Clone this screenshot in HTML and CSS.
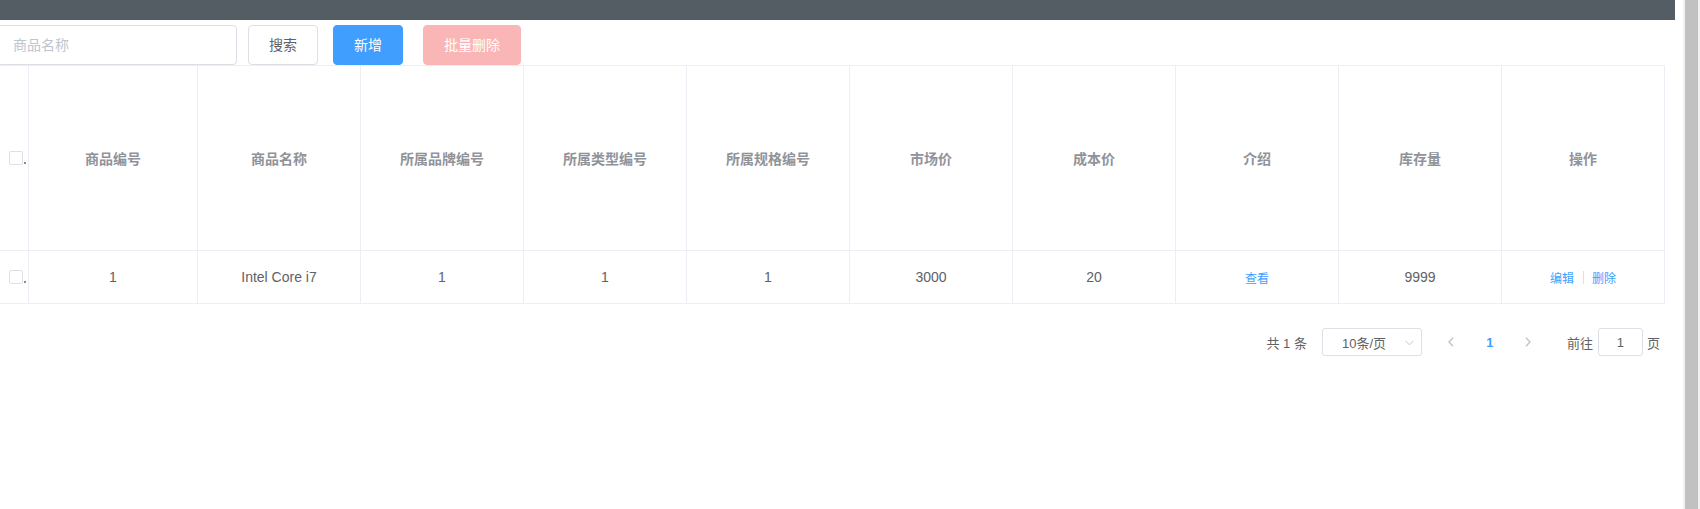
FILE: index.html
```html
<!DOCTYPE html>
<html lang="zh-CN">
<head>
<meta charset="utf-8">
<title>商品管理</title>
<link rel="stylesheet" href="styles.css">
</head>
<body>
<div class="app">
  <div class="main">
    <div class="page">
      <div class="topbar"></div>
      <div class="toolbar">
        <input class="search-input" type="text" placeholder="商品名称">
        <button class="btn btn-default">搜索</button>
        <button class="btn btn-primary">新增</button>
        <button class="btn btn-danger" disabled>批量删除</button>
      </div>
      <div class="table">
        <div class="th sel"><span class="checkbox"></span><span class="dot"></span></div>
        <div class="th">商品编号</div>
        <div class="th">商品名称</div>
        <div class="th">所属品牌编号</div>
        <div class="th">所属类型编号</div>
        <div class="th">所属规格编号</div>
        <div class="th">市场价</div>
        <div class="th">成本价</div>
        <div class="th">介绍</div>
        <div class="th">库存量</div>
        <div class="th">操作</div>

        <div class="td sel"><span class="checkbox"></span><span class="dot"></span></div>
        <div class="td">1</div>
        <div class="td">Intel Core i7</div>
        <div class="td">1</div>
        <div class="td">1</div>
        <div class="td">1</div>
        <div class="td">3000</div>
        <div class="td">20</div>
        <div class="td"><a class="link">查看</a></div>
        <div class="td">9999</div>
        <div class="td"><a class="link">编辑</a><span class="divider"></span><a class="link">删除</a></div>
      </div>
      <div class="pagination">
        <span class="total">共 1 条</span>
        <div class="sizes">
          <span class="sizes-text">10条/页</span>
          <svg class="sizes-arrow" width="9" height="6" viewBox="0 0 9 6"><polyline points="0.5,0.8 4.5,4.8 8.5,0.8" fill="none" stroke="#c0c4cc" stroke-width="1"/></svg>
        </div>
        <span class="nav prev"><svg width="6" height="10" viewBox="0 0 6 10"><polyline points="5,0.8 1,5 5,9.2" fill="none" stroke="#c0c4cc" stroke-width="1.4"/></svg></span>
        <span class="pager">1</span>
        <span class="nav next"><svg width="6" height="10" viewBox="0 0 6 10"><polyline points="1,0.8 5,5 1,9.2" fill="none" stroke="#c0c4cc" stroke-width="1.4"/></svg></span>
        <span class="jump-label">前往</span>
        <input class="jump-input" type="text" value="1">
        <span class="jump-unit">页</span>
      </div>
    </div>
  </div>
  <div class="scrollbar"><div class="thumb"></div></div>
</div>
</body>
</html>
```

FILE: styles.css
```css
html, body {
  margin: 0;
  padding: 0;
  background: #fff;
}

body {
  font-family: "Liberation Sans", "Noto Sans CJK SC", sans-serif;
  overflow: hidden;
}

.app {
  display: flex;
  height: 509px;
}

.main {
  width: 1683px;
  flex: none;
  overflow: hidden;
}

.page {
  margin-left: -3px;
  width: 1678px;
}

.topbar {
  height: 20px;
  background: #545c64;
}

.toolbar {
  display: flex;
  margin-top: 5px;
  height: 40px;
}

.search-input {
  width: 240px;
  height: 40px;
  box-sizing: border-box;
  border: 1px solid #dcdfe6;
  border-radius: 4px;
  padding: 0 15px;
  font-size: 14px;
  font-family: inherit;
  color: #606266;
  outline: none;
  background: #fff;
}

.search-input::placeholder {
  color: #c0c4cc;
}

.btn {
  height: 40px;
  box-sizing: border-box;
  padding: 0;
  font-size: 14px;
  font-family: inherit;
  border-radius: 4px;
  border: 1px solid #dcdfe6;
  text-align: center;
  line-height: 1;
}

.btn-default {
  width: 70px;
  margin-left: 11px;
  background: #fff;
  color: #606266;
}

.btn-primary {
  width: 70px;
  margin-left: 15px;
  background: #409eff;
  border-color: #409eff;
  color: #fff;
}

.btn-danger {
  width: 98px;
  margin-left: 20px;
  background: #fab6b6;
  border-color: #fab6b6;
  color: #fff;
}

.table {
  display: grid;
  grid-template-columns: 31px 169px repeat(9, 163px);
  width: max-content;
  border-top: 1px solid #ebeef5;
  border-left: 1px solid #ebeef5;
}

.th,
.td {
  box-sizing: border-box;
  border-right: 1px solid #ebeef5;
  border-bottom: 1px solid #ebeef5;
  display: flex;
  align-items: center;
  justify-content: center;
  font-size: 14px;
  white-space: nowrap;
  overflow: hidden;
}

.th {
  height: 185px;
  font-weight: bold;
  color: #909399;
}

.td {
  height: 53px;
  color: #606266;
}

.sel {
  justify-content: flex-start;
  padding-left: 11px;
}

.checkbox {
  width: 14px;
  height: 14px;
  box-sizing: border-box;
  border: 1px solid #dcdfe6;
  border-radius: 2px;
  background: #fff;
  flex: none;
}

.dot {
  width: 2px;
  height: 2px;
  margin-left: 1px;
  margin-top: 10px;
  background: #8a8c90;
  flex: none;
}

.link {
  color: #409eff;
  font-size: 12px;
  cursor: pointer;
}

.divider {
  display: inline-block;
  width: 1px;
  height: 13px;
  margin: 0 8px 0 9px;
  background: #dcdfe6;
}

.pagination {
  display: flex;
  justify-content: flex-end;
  align-items: center;
  width: 1668px;
  box-sizing: border-box;
  padding-right: 5px;
  margin-top: 24px;
  height: 28px;
  font-size: 13px;
  color: #606266;
}

.total {
  margin-right: 15px;
  white-space: nowrap;
}

.sizes {
  width: 100px;
  height: 28px;
  box-sizing: border-box;
  border: 1px solid #dcdfe6;
  border-radius: 3px;
  display: flex;
  align-items: center;
  padding-left: 19px;
  position: relative;
}

.sizes-text {
  white-space: nowrap;
}

.sizes-arrow {
  position: absolute;
  right: 7px;
  top: 11px;
}

.nav {
  width: 30px;
  height: 28px;
  display: flex;
  align-items: center;
  justify-content: center;
}

.prev {
  margin-left: 14px;
}

.pager {
  width: 36px;
  margin-left: 6px;
  text-align: center;
  color: #409eff;
  font-weight: bold;
}

.next {
  margin-left: 5px;
}

.jump-label {
  margin-left: 24px;
  white-space: nowrap;
}

.jump-input {
  width: 45px;
  height: 28px;
  box-sizing: border-box;
  margin: 0 4px 0 5px;
  border: 1px solid #dcdfe6;
  border-radius: 3px;
  text-align: center;
  font-size: 13px;
  font-family: inherit;
  color: #606266;
  padding: 0;
  outline: none;
}

.jump-unit {
  white-space: nowrap;
}

.scrollbar {
  width: 17px;
  flex: none;
  background: #f1f1f1;
  box-sizing: border-box;
  padding: 0 2px;
  display: flex;
}

.thumb {
  flex: 1;
  background: #c1c1c1;
}
```
